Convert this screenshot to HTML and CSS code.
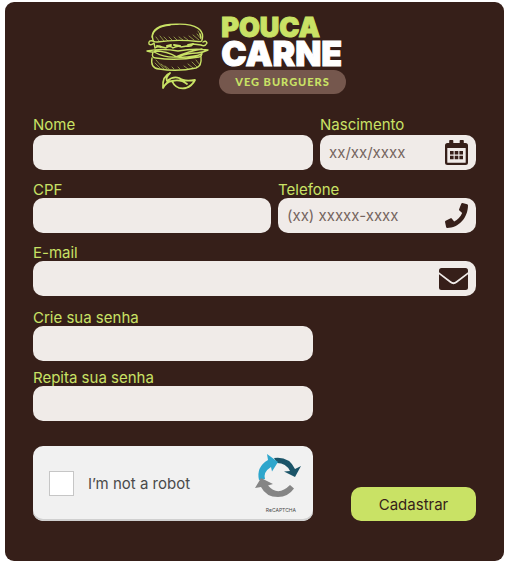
FILE: index.html
```html
<!DOCTYPE html>
<html lang="pt-BR">
<head>
<meta charset="utf-8">
<meta name="viewport" content="width=device-width, initial-scale=1">
<title>Pouca Carne – Cadastro</title>
<link rel="stylesheet" href="styles.css">
</head>
<body>
<main class="card">
  <header class="brand">
    <svg class="burger" viewBox="0 0 66 70" aria-hidden="true">
      <g fill="none" stroke="#c9e265" stroke-width="1.4" stroke-linecap="round" stroke-linejoin="round">
        <path d="M8 17C5 7 13 1 32 1.200C51 .5 60 7 57 17Q57 19 53 18.500Q32 16 12 19Q8 19 8 17Z"/>
        <path d="M7 14C8 7 15 3 25 2M55 11L56 15"/>
        <path stroke-width=".6" d="M11 14l3 4M15 13l4 5M19 14l4 4M24 14l3 3M29 14l3 3M34 14l4 3M39 14l4 3M44 13l5 4M48 12l6 5M52 11l4 5M53 8l3 5"/>
        <path d="M8 18Q3 17 4 21Q6 23 9 20L10 25Q14 22 17 24L21 25Q25 22 28 25Q33 22 36 24L42 23Q46 24 48 21L56 22Q60 24 62 20Q61 17 58 19"/>
        <path stroke-width="2" d="M12 23l4 1M22 23l4-1M29 22l6 1M43 22l5-1"/>
        <path d="M2 28Q17 25 33 28Q49 25 63 27Q57 30 52 30Q43 30 32 34Q22 28 10 28Q9 30 2 28ZM31 34Q44 28 57 26M9 29Q20 35 32 34Q46 35 57 31M8 29Q6 35 11 35Q31 38 54 34Q57 34 57 29"/>
        <path d="M7 35Q5 45 14 46Q33 49 51 45Q57 43 56 34"/>
        <path stroke-width=".6" d="M10 40l5 5M11 37l8 9M16 41l6 5M20 43l4 3M27 44l2 2M33 44l2 2M39 43l4 3M43 41l5 4M47 39l5 5M51 37l4 5"/>
        <path stroke-width="1.8" d="M25 50Q17 53 18 65Q22 58 27 58Q31 67 41 65Q47 63 50 57Q39 59 34 55Q28 53 22 58Q20 55 25 50ZM27 58Q36 56 42 61"/>
      </g>
    </svg>
    <h1 class="brand-text">
      <span class="brand-top">POUCA</span>
      <span class="brand-main">CARNE</span>
      <span class="brand-tag">VEG BURGUERS</span>
    </h1>
  </header>

  <form class="form">
    <div class="row row-name row-first">
      <div class="field">
        <label for="nome">Nome</label>
        <input id="nome" type="text">
      </div>
      <div class="field">
        <label for="nascimento">Nascimento</label>
        <div class="control">
          <input id="nascimento" type="text" placeholder="xx/xx/xxxx">
          <svg class="icon" viewBox="0 0 23 25" aria-hidden="true">
            <path fill="#361f19" fill-rule="evenodd" d="M5 0h2.500a.8.8 0 0 1 .8.8V3h6.400V.8a.8.8 0 0 1 .8-.8H18a.8.8 0 0 1 .8.8V3H20.500A2.500 2.500 0 0 1 23 5.500v17A2.500 2.500 0 0 1 20.500 25h-18A2.500 2.500 0 0 1 0 22.500v-17A2.500 2.500 0 0 1 2.500 3h1.700V.8A.8.8 0 0 1 5 0zM2.300 8v14.200a.5.5 0 0 0 .5.5h17.400a.5.5 0 0 0 .5-.5V8z"/>
            <path fill="#361f19" d="M5 11h3.600v3.600H5zM9.700 11h3.600v3.600H9.700zM14.400 11H18v3.600h-3.600zM5 15.700h3.600v3.600H5zM9.700 15.700h3.600v3.600H9.700zM14.400 15.700H18v3.600h-3.600z"/>
          </svg>
        </div>
      </div>
    </div>

    <div class="row row-contact">
      <div class="field">
        <label for="cpf">CPF</label>
        <input id="cpf" type="text">
      </div>
      <div class="field">
        <label for="telefone">Telefone</label>
        <div class="control">
          <input id="telefone" type="tel" placeholder="(xx) xxxxx-xxxx">
          <svg class="icon" viewBox="0 0 512 512" preserveAspectRatio="none" aria-hidden="true">
            <path fill="#361f19" d="M493.400 24.600l-104-24c-11.300-2.600-22.900 3.300-27.500 13.900l-48 112c-4.200 9.800-1.400 21.300 6.900 28l60.600 49.600c-36 76.700-98.900 140.500-177.200 177.200l-49.600-60.600c-6.800-8.300-18.200-11.100-28-6.900l-112 48C3.900 366.500-2 378.100.6 389.400l24 104C27.100 504.200 36.700 512 48 512c256.100 0 464-207.500 464-464 0-11.200-7.700-20.900-18.600-23.400z"/>
          </svg>
        </div>
      </div>
    </div>

    <div class="field">
      <label for="email">E-mail</label>
      <div class="control">
        <input id="email" type="email">
        <svg class="icon icon-wide" viewBox="0 0 29 22" aria-hidden="true">
          <rect width="29" height="22" rx="2.500" fill="#361f19"/>
          <path d="M-1 4.500L11.500 14Q14.500 16.500 17.500 14L30 4.500" fill="none" stroke="#f0ebe8" stroke-width="1.700"/>
        </svg>
      </div>
    </div>

    <div class="passwords">
      <div class="row row-name">
        <div class="field">
          <label for="senha">Crie sua senha</label>
          <input id="senha" type="password">
        </div>
      </div>
      <div class="row row-name">
        <div class="field">
          <label for="senha2">Repita sua senha</label>
          <input id="senha2" type="password">
        </div>
      </div>
    </div>

    <div class="row row-name row-submit">
      <div class="captcha">
        <input id="robot" type="checkbox">
        <label for="robot">I’m not a robot</label>
        <div class="captcha-brand">
          <svg viewBox="0 0 46 44" aria-hidden="true">
            <path fill="#1b5468" d="M19 4Q34 2 40 15L46 12L40 23L29 17.500L35 17Q31 9 22 9Z"/>
            <path fill="#2ea6cc" d="M12 0L23 8L17 17.500L16 13Q8 18 10 25L4 26Q1 13 13 6Z"/>
            <path fill="#858585" d="M0 34L6 24L18 30L13 31.500Q23 43 35 31L39 34.500Q33 43 23 43Q11 43 6 33Z"/>
          </svg>
          <small>ReCAPTCHA</small>
        </div>
      </div>
      <button type="submit">Cadastrar</button>
    </div>
  </form>
</main>
</body>
</html>
```
FILE: styles.css
```css
* {
  box-sizing: border-box;
}

body {
  margin: 2px 2px 0 5px;
  background: #fff;
  font-family: Inter, "Liberation Sans", sans-serif;
  font-size: 15px;
}

.card {
  min-height: calc(100vh - 2px);
  padding: 12px 28px 40px;
  border-radius: 9px;
  background: #361f19;
}

.brand {
  display: flex;
  justify-content: center;
  gap: 8px;
  padding-right: 18px;
}

.burger {
  width: 66px;
  height: 70px;
  margin-top: 9px;
}

.brand-text {
  display: flex;
  flex-direction: column;
  margin: 0;
  padding-top: 1px;
  font-weight: 900;
}

.brand-top,
.brand-main {
  padding-left: 2px;
  -webkit-text-stroke: 1px currentColor;
}

.brand-top {
  color: #c9e265;
  font-size: 27px;
  line-height: 26px;
}

.brand-main {
  color: #fff;
  font-size: 34px;
  line-height: 26px;
}

.brand-tag {
  margin-top: 3px;
  padding: 0 16px;
  border-radius: 12px;
  background: #75574d;
  color: #c9e265;
  font-family: Lato, sans-serif;
  font-size: 11px;
  font-weight: 900;
  letter-spacing: 1px;
  line-height: 24px;
  text-align: center;
}

.form {
  display: flex;
  flex-direction: column;
  gap: 12px;
  margin-top: 23px;
}

.row {
  display: grid;
  gap: 7px;
}

.row-name {
  grid-template-columns: 280fr 156fr;
}

.row-contact {
  grid-template-columns: 238fr 198fr;
}

.passwords {
  display: flex;
  flex-direction: column;
  gap: 9px;
  margin-top: 2px;
}

.field {
  display: flex;
  flex-direction: column;
  min-width: 0;
}

.field label {
  color: #c9e265;
  line-height: 16px;
}

.row-first label {
  padding-bottom: 2px;
}

.field input {
  width: 100%;
  height: 35px;
  padding: 0 40px 0 9px;
  border: 0;
  border-radius: 10px;
  background: #f0ebe8;
  color: #361f19;
  font: inherit;
}

.field input::placeholder {
  color: #75655f;
  opacity: 1;
}

.control {
  position: relative;
}

.icon {
  position: absolute;
  top: 5px;
  right: 8px;
  width: 23px;
  height: 25px;
}

.icon-wide {
  top: 7px;
  width: 29px;
  height: 22px;
}

.row-submit {
  align-items: end;
  margin-top: 13px;
}

.captcha {
  display: flex;
  align-items: center;
  gap: 14px;
  height: 75px;
  padding: 0 12px 0 16px;
  border-radius: 10px;
  background: #f1f1f1;
  box-shadow: inset 0 -2px #d0d0d0;
  color: #4a4a4a;
}

.captcha > input {
  appearance: none;
  width: 25px;
  height: 25px;
  margin: 0;
  border: 1px solid #c6c6c6;
  background: #fff;
}

.captcha-brand {
  display: flex;
  flex-direction: column;
  align-items: flex-end;
  gap: 8px;
  margin-left: auto;
}

.captcha-brand svg {
  width: 46px;
  height: 44px;
}

.captcha-brand small {
  padding-right: 5px;
  font-size: 5px;
  line-height: 8px;
}

button {
  justify-self: end;
  width: 125px;
  height: 34px;
  padding: 0;
  border: 0;
  border-radius: 10px;
  background: #c9e265;
  color: #361f19;
  font: inherit;
}
```
